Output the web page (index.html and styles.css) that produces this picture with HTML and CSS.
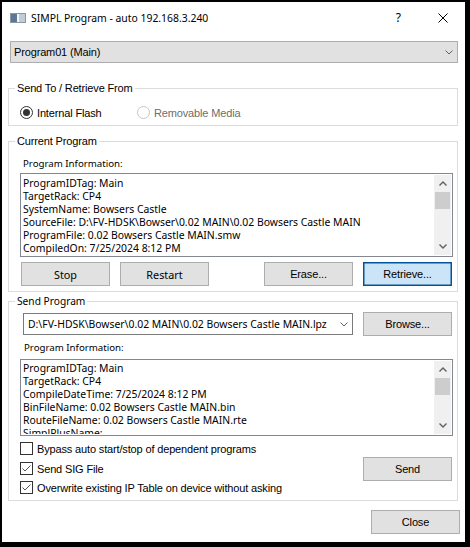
FILE: index.html
```html
<!DOCTYPE html>
<html>
<head>
<meta charset="utf-8">
<link rel="stylesheet" href="styles.css">
</head>
<body>
<div class="window">
  <div class="titlebar">
    <svg class="appicon" width="16" height="10" viewBox="0 0 16 10">
      <rect x="0" y="0" width="16" height="10" fill="#d4dbe2"/>
      <rect x="0" y="0" width="7" height="10" fill="#5b7896"/>
      <rect x="7" y="0" width="2" height="10" fill="#f4f6f8"/>
      <rect x="9" y="0" width="7" height="10" fill="#c3ccd4"/>
      <rect x="0.5" y="0.5" width="15" height="9" fill="none" stroke="#8a97a4" stroke-width="1"/>
    </svg>
    <span class="title">SIMPL Program - auto 192.168.3.240</span>
    <span class="help">?</span>
    <svg class="closex" width="10" height="10" viewBox="0 0 10 10">
      <path d="M0.5 0.5 L9.5 9.5 M9.5 0.5 L0.5 9.5" stroke="#000" stroke-width="1" fill="none"/>
    </svg>
  </div>
  <div class="content">
    <div class="combo combo-top">
      <span class="combo-text ms">Program01 (Main)</span>
      <svg class="chev" width="8" height="5" viewBox="0 0 8 5"><path d="M0.5 0.5 L4 4 L7.5 0.5" stroke="#606060" stroke-width="1" fill="none"/></svg>
    </div>

    <fieldset class="group g1">
      <legend class="ms">Send To / Retrieve From</legend>
      <div class="radios">
        <label class="radio r1 ms">
          <svg width="13" height="13" viewBox="0 0 13 13"><circle cx="6.5" cy="6.5" r="6" fill="#fff" stroke="#333" stroke-width="1"/><circle cx="6.5" cy="6.5" r="3.5" fill="#333"/></svg>
          <span>Internal Flash</span>
        </label>
        <label class="radio r2 ms disabled">
          <svg width="13" height="13" viewBox="0 0 13 13"><circle cx="6.5" cy="6.5" r="6" fill="#fff" stroke="#c6c6c6" stroke-width="1"/></svg>
          <span>Removable Media</span>
        </label>
      </div>
    </fieldset>

    <fieldset class="group g2">
      <legend class="ms">Current Program</legend>
      <div class="label seg">Program Information:</div>
      <div class="listbox lb1">
        <div class="lb-text seg">
          <div>ProgramIDTag: Main</div>
          <div>TargetRack: CP4</div>
          <div>SystemName: Bowsers Castle</div>
          <div>SourceFile: D:\FV-HDSK\Bowser\0.02 MAIN\0.02 Bowsers Castle MAIN</div>
          <div>ProgramFile: 0.02 Bowsers Castle MAIN.smw</div>
          <div>CompiledOn: 7/25/2024 8:12 PM</div>
        </div>
        <div class="sb">
          <div class="sb-btn"><svg width="8" height="5" viewBox="0 0 8 5"><path d="M0.5 4.5 L4 1 L7.5 4.5" stroke="#606060" stroke-width="1.4" fill="none"/></svg></div>
          <div class="sb-thumb"></div>
          <div class="sb-track"></div>
          <div class="sb-btn"><svg width="8" height="5" viewBox="0 0 8 5"><path d="M0.5 0.5 L4 4 L7.5 0.5" stroke="#606060" stroke-width="1.4" fill="none"/></svg></div>
        </div>
      </div>
      <div class="btnrow">
        <div class="btngroup">
          <button class="btn seg btxt">Stop</button>
          <button class="btn seg btxt">Restart</button>
        </div>
        <div class="btngroup">
          <button class="btn ms">Erase...</button>
          <button class="btn ms focused">Retrieve...</button>
        </div>
      </div>
    </fieldset>

    <fieldset class="group g3">
      <legend class="seg legend-seg">Send Program</legend>
      <div class="pathrow">
        <div class="combo combo-path">
          <span class="combo-text seg">D:\FV-HDSK\Bowser\0.02 MAIN\0.02 Bowsers Castle MAIN.lpz</span>
          <svg class="chev" width="8" height="5" viewBox="0 0 8 5"><path d="M0.5 0.5 L4 4 L7.5 0.5" stroke="#606060" stroke-width="1" fill="none"/></svg>
        </div>
        <button class="btn ms">Browse...</button>
      </div>
      <div class="label label2 seg">Program Information:</div>
      <div class="listbox lb2">
        <div class="lb-text seg">
          <div>ProgramIDTag: Main</div>
          <div>TargetRack: CP4</div>
          <div>CompileDateTime: 7/25/2024 8:12 PM</div>
          <div>BinFileName: 0.02 Bowsers Castle MAIN.bin</div>
          <div>RouteFileName: 0.02 Bowsers Castle MAIN.rte</div>
          <div>SimplPlusName:</div>
        </div>
        <div class="sb">
          <div class="sb-btn"><svg width="8" height="5" viewBox="0 0 8 5"><path d="M0.5 4.5 L4 1 L7.5 4.5" stroke="#606060" stroke-width="1.4" fill="none"/></svg></div>
          <div class="sb-thumb"></div>
          <div class="sb-track"></div>
          <div class="sb-btn"><svg width="8" height="5" viewBox="0 0 8 5"><path d="M0.5 0.5 L4 4 L7.5 0.5" stroke="#606060" stroke-width="1.4" fill="none"/></svg></div>
        </div>
      </div>
      <div class="sendrow">
        <div class="checks">
          <label class="check c1 ms">
            <svg width="13" height="13" viewBox="0 0 13 13"><rect x="0.5" y="0.5" width="12" height="12" fill="#fff" stroke="#333" stroke-width="1"/></svg>
            <span>Bypass auto start/stop of dependent programs</span>
          </label>
          <label class="check c2 ms">
            <svg width="13" height="13" viewBox="0 0 13 13"><rect x="0.5" y="0.5" width="12" height="12" fill="#fff" stroke="#333" stroke-width="1"/><path d="M2.5 6.5 L5 9 L10.5 3.5" stroke="#555" stroke-width="1" fill="none"/></svg>
            <span>Send SIG File</span>
          </label>
          <label class="check c3 ms">
            <svg width="13" height="13" viewBox="0 0 13 13"><rect x="0.5" y="0.5" width="12" height="12" fill="#fff" stroke="#333" stroke-width="1"/><path d="M2.5 6.5 L5 9 L10.5 3.5" stroke="#555" stroke-width="1" fill="none"/></svg>
            <span>Overwrite existing IP Table on device without asking</span>
          </label>
        </div>
        <button class="btn ms sendbtn">Send</button>
      </div>
    </fieldset>

    <div class="footer">
      <button class="btn ms">Close</button>
    </div>
  </div>
</div>
</body>
</html>
```

FILE: styles.css
```css
html, body {
  margin: 0;
  padding: 0;
}
body {
  background: #000;
  width: 470px;
  height: 547px;
  overflow: hidden;
}
.ms {
  font-family: "Liberation Sans", Arial, sans-serif;
  font-size: 11px;
  letter-spacing: -0.15px;
}
.seg {
  font-family: "Noto Sans", sans-serif;
  font-size: 10.4px;
}
.window {
  margin: 2px 0 0 2px;
  width: 463px;
  height: 540px;
  background: #fff;
  display: flex;
  flex-direction: column;
}
.titlebar {
  height: 31px;
  flex: none;
  display: flex;
  align-items: center;
}
.appicon {
  margin-left: 8px;
  margin-top: 1px;
  flex: none;
}
.title {
  margin-left: 5px;
  flex: 1;
  font-family: "Noto Sans", sans-serif;
  font-size: 10.4px;
  color: #000;
}
.help {
  font-family: "Noto Sans", sans-serif;
  font-size: 12px;
  margin-right: 37px;
}
.closex {
  margin-right: 17px;
  flex: none;
}
.content {
  flex: 1;
  display: flex;
  flex-direction: column;
  padding: 8px 0 0 6px;
}
.combo {
  box-sizing: border-box;
  display: flex;
  align-items: center;
  height: 22px;
}
.combo-top {
  width: 448px;
  margin-left: 2px;
  background: #e1e1e1;
  border: 1px solid #adadad;
  padding: 0 4px 0 3px;
}
.combo-text {
  flex: 1;
  white-space: nowrap;
  overflow: hidden;
}
.chev {
  flex: none;
}
.group {
  box-sizing: border-box;
  width: 450px;
  margin: 0;
  padding: 0 4px 0 11px;
  border: 1px solid #dcdcdc;
  min-width: 0;
}
.group legend {
  padding: 0 2px;
  margin-left: -5px;
  line-height: 13px;
  height: 13px;
  color: #000;
}
.group legend.legend-seg {
  font-size: 10.2px;
}
.g1 {
  margin-top: 19px;
  padding-top: 11px;
  padding-bottom: 6px;
}
.radios {
  display: flex;
  height: 13px;
  align-items: center;
}
.radio {
  display: flex;
  align-items: center;
  gap: 4px;
  height: 13px;
}
.radio svg, .check svg {
  flex: none;
  display: block;
}
.r1 {
  width: 117px;
}
.disabled {
  color: #6d6d6d;
}
.g2 {
  margin-top: 9px;
  padding-top: 9px;
  padding-bottom: 5px;
}
.label {
  line-height: 13px;
  height: 13px;
  margin-left: 3px;
  font-size: 9.7px;
}
.listbox {
  box-sizing: border-box;
  margin-top: 3px;
  width: 433px;
  border: 1px solid #828790;
  padding: 1px;
  display: flex;
  background: #fff;
}
.lb1 {
  height: 84px;
}
.lb-text {
  flex: 1;
  padding: 2px 0 0 1px;
  line-height: 13px;
  overflow: hidden;
  white-space: nowrap;
  color: #000;
}
.lb2 .lb-text {
  padding-top: 1px;
}
.sb {
  width: 17px;
  flex: none;
  background: #f0f0f0;
  display: flex;
  flex-direction: column;
}
.sb-btn {
  height: 17px;
  display: flex;
  align-items: center;
  justify-content: center;
  flex: none;
}
.sb-thumb {
  height: 17px;
  margin: 0 1px;
  background: #cdcdcd;
  flex: none;
}
.sb-track {
  flex: 1;
}
.btnrow {
  display: flex;
  justify-content: space-between;
  margin: 5px 1px 0 1px;
}
.btngroup {
  display: flex;
  gap: 10px;
}
.btn {
  box-sizing: border-box;
  width: 89px;
  height: 24px;
  background: #e1e1e1;
  border: 1px solid #adadad;
  color: #000;
  padding: 0;
  margin: 0;
  border-radius: 0;
}
.btn.btxt {
  font-size: 10.8px;
}
.btn.focused {
  background: #cce4f7;
  border: 1px solid #005499;
  box-shadow: inset 0 0 0 0.5px #005499;
}
.g3 {
  margin-top: 3px;
  padding-top: 4px;
  padding-bottom: 6px;
}
.pathrow {
  display: flex;
  align-items: center;
  justify-content: space-between;
  margin-right: 1px;
}
.combo-path {
  width: 330px;
  margin-left: 3px;
  background: #fff;
  border: 1px solid #7a7a7a;
  padding: 0 4px 0 4px;
}
.label2 {
  margin-top: 5px;
  margin-left: 4px;
}
.lb2 {
  height: 77px;
  margin-top: 5px;
}
.sendrow {
  display: flex;
  justify-content: space-between;
  margin-top: 6px;
  margin-right: 1px;
}
.checks {
  display: flex;
  flex-direction: column;
}
.check {
  display: flex;
  align-items: center;
  gap: 4px;
  height: 13px;
}
.c1 {
  margin-bottom: 7px;
}
.c2 {
  margin-bottom: 6px;
}
.sendbtn {
  margin-top: 15px;
}
.footer {
  display: flex;
  justify-content: flex-end;
  margin-top: 9px;
  padding-right: 5px;
}
```
